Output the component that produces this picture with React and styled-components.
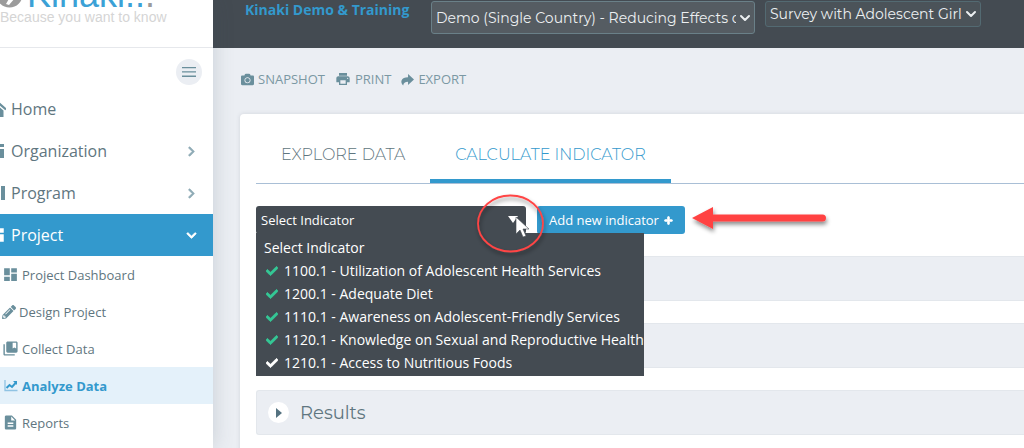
import React from 'react';
import styled, { createGlobalStyle, css } from 'styled-components';
import {
  FaCamera,
  FaCheck,
  FaChevronDown,
  FaChevronRight,
  FaPencilAlt,
  FaPlus,
} from 'react-icons/fa';
import { MdCollectionsBookmark, MdDashboard, MdDescription, MdPrint } from 'react-icons/md';
import { ChevronDown } from 'lucide-react';

const GlobalStyle = createGlobalStyle`
  * {
    box-sizing: border-box;
  }
  body {
    margin: 0;
    overflow: hidden;
    background-color: #ebeef3;
    color: #5f7680;
    font-family: 'Open Sans', 'Noto Sans', sans-serif;
  }
`;

const Page = styled.div`
  display: flex;
  height: 100vh;
  overflow: hidden;
`;

const Sidebar = {
  container: styled.aside`
    position: relative;
    z-index: 1;
    flex: 0 0 213px;
    overflow: hidden;
    background-color: #fff;
    box-shadow: 0 0 20px rgba(60, 75, 90, 0.2);
  `,
  brand: styled.div`
    height: 48px;
    overflow: hidden;
    border-bottom: 1px solid #e6e8ec;
    font-family: 'Liberation Sans', Arial, sans-serif;
  `,
  logo: styled.div`
    display: flex;
    align-items: flex-end;
    gap: 4px;
    height: 40px;
    margin-top: -25px;
    color: #3ba1d6;
    font-size: 36px;
    line-height: 40px;
    svg {
      flex: none;
    }
    span {
      color: #9b9b9b;
    }
  `,
  tagline: styled.div`
    margin-top: -7px;
    color: #d5d5d5;
    font-size: 14px;
    line-height: 18px;
    white-space: nowrap;
  `,
  tools: styled.div`
    display: flex;
    justify-content: flex-end;
    padding: 11px 11px 3px;
  `,
  nav: styled.nav`
    display: flex;
    flex-direction: column;
  `,
};

const MenuButton = styled.button`
  display: flex;
  align-items: center;
  justify-content: center;
  width: 26px;
  height: 26px;
  padding: 0;
  border: 0;
  border-radius: 50%;
  background-color: #ebeef3;
  color: #6a8f9c;
`;

const NavLink = styled.a`
  display: flex;
  align-items: center;
  gap: 5px;
  height: 42px;
  padding-right: 16px;
  color: #5f7680;
  font-size: 16px;
  text-decoration: none;
  .icon {
    flex: none;
    width: 18px;
    height: 18px;
    margin-left: -12px;
    color: #6a8f9c;
  }
  .arrow {
    margin-left: auto;
    color: #8fabb6;
    stroke: currentColor;
    stroke-width: 30px;
  }
  ${(props) =>
    props.$active &&
    css`
      background-color: #3399cd;
      color: #fff;
      .icon,
      .arrow {
        color: #fff;
      }
    `}
`;

const SubLink = styled.a`
  display: flex;
  align-items: center;
  gap: 3px;
  height: 37px;
  padding-left: 2px;
  color: #5f7680;
  font-size: 13px;
  text-decoration: none;
  svg {
    flex: none;
    color: #6a8f9c;
  }
  ${(props) =>
    props.$active &&
    css`
      background-color: #e4f1fa;
      color: #3399cd;
      font-weight: 700;
      svg {
        color: #3399cd;
      }
    `}
`;

const Main = styled.div`
  flex: 1;
  min-width: 0;
`;

const Header = {
  container: styled.header`
    display: flex;
    align-items: flex-start;
    height: 48px;
    padding: 1px 32px 0;
    background-color: #444b52;
  `,
  title: styled.div`
    flex: none;
    width: 186px;
    color: #3399cd;
    font-size: 14px;
    font-weight: 700;
    line-height: 18px;
  `,
  field: styled.div`
    position: relative;
    flex: 0 1 ${(props) => (props.$large ? '324px' : '216px')};
    margin-right: 10px;
    color: #eceff1;
    svg {
      position: absolute;
      top: 50%;
      right: 2px;
      margin-top: -8px;
      pointer-events: none;
    }
  `,
  select: styled.select`
    display: block;
    width: 100%;
    height: ${(props) => (props.$large ? '33px' : '26px')};
    padding: 0 18px 0 4px;
    border: 1px solid ${(props) => (props.$large ? '#6a8088' : '#536a72')};
    border-radius: 3px;
    appearance: none;
    background-color: ${(props) => (props.$large ? '#555c62' : '#4b5359')};
    color: inherit;
    font-family: Montserrat, Inter, sans-serif;
    font-size: 14px;
  `,
};

const Actions = styled.div`
  display: flex;
  gap: 10px;
  padding: 21px 28px 25px;
`;

const ActionButton = styled.button`
  display: flex;
  align-items: center;
  gap: 4px;
  height: 20px;
  padding: 0;
  border: 0;
  background: none;
  color: #7b98a3;
  font-family: inherit;
  font-size: 13px;
  svg {
    flex: none;
    color: #6a8f9c;
  }
`;

const Card = styled.section`
  min-height: 400px;
  margin-left: 27px;
  padding: 26px 0 0 16px;
  border-radius: 4px 0 0 0;
  background-color: #fff;
  box-shadow: 0 0 4px rgba(60, 75, 90, 0.15);
`;

const Tabs = styled.div`
  display: flex;
  border-bottom: 1px solid #a9bfd6;
`;

const Tab = styled.button`
  height: 43px;
  padding: 0 25px 10px;
  border: 0;
  border-bottom: 4px solid ${(props) => (props.$active ? '#3399cd' : 'transparent')};
  background: none;
  color: ${(props) => (props.$active ? '#3399cd' : '#5f7680')};
  font-family: Montserrat, Inter, sans-serif;
  font-size: 16px;
  font-weight: 300;
  white-space: nowrap;
`;

const Indicator = {
  row: styled.div`
    position: relative;
    display: flex;
    gap: 11px;
    margin: 22px 0;
  `,
  field: styled.div`
    position: relative;
    flex: 0 0 270px;
  `,
  select: styled.select`
    display: block;
    width: 100%;
    height: 28px;
    padding: 0 5px;
    border: 0;
    border-radius: 3px;
    appearance: none;
    background-color: #444b52;
    color: #fff;
    font-family: inherit;
    font-size: 13px;
  `,
  caret: styled.svg`
    position: absolute;
    top: 10px;
    right: 8px;
    pointer-events: none;
  `,
  list: styled.ul`
    position: absolute;
    z-index: 2;
    top: 27px;
    left: 0;
    width: 388px;
    margin: 0;
    padding: 3px 0 2px;
    overflow: hidden;
    background-color: #444b52;
    color: #fff;
    font-size: 14px;
    list-style: none;
  `,
  option: styled.li`
    display: flex;
    align-items: center;
    gap: 6px;
    height: 23px;
    padding-left: ${(props) => (props.$plain ? '8px' : '10px')};
    white-space: nowrap;
    svg {
      flex: none;
      color: ${(props) => (props.$done ? '#34c795' : '#fff')};
      stroke: currentColor;
      stroke-width: 30px;
    }
  `,
};

const AddButton = styled.button`
  display: flex;
  align-items: center;
  gap: 5px;
  height: 28px;
  padding: 0 12px;
  border: 0;
  border-radius: 3px;
  background-color: #3399cd;
  color: #fff;
  font-family: inherit;
  font-size: 13px;
  white-space: nowrap;
  svg {
    stroke: currentColor;
    stroke-width: 50px;
  }
`;

const Annotation = styled.svg`
  position: absolute;
  z-index: 3;
  top: -16px;
  left: 214px;
  pointer-events: none;
`;

const Panels = styled.div`
  display: flex;
  flex-direction: column;
  gap: 22px;
`;

const Panel = styled.button`
  display: flex;
  align-items: center;
  gap: 11px;
  width: 100%;
  height: 45px;
  padding: 0 11px;
  border: 1px solid #e3e7ec;
  border-right: 0;
  border-radius: 3px 0 0 3px;
  background-color: #ebeef3;
  color: #5f7680;
  font-family: Montserrat, Inter, sans-serif;
  font-size: 18px;
`;

const PanelArrow = styled.span`
  display: flex;
  align-items: center;
  justify-content: center;
  width: 21px;
  height: 21px;
  border-radius: 50%;
  background-color: #fff;
`;

const HouseIcon = () => (
  <svg className="icon" viewBox="0 0 18 18" fill="currentColor" aria-hidden="true">
    <path d="M1 9.500L9.500 2 18 9.500" fill="none" stroke="currentColor" strokeWidth="2.200" />
    <path d="M3.500 10.500l6-5 6 5V17H11v-4H8v4H3.500z" />
  </svg>
);

const BuildingIcon = () => (
  <svg className="icon" viewBox="0 0 18 18" fill="currentColor" aria-hidden="true">
    <path d="M1 6h7v10H1zM10 2h6v3h-6zM10 7h6v9h-6z" />
  </svg>
);

const ColumnsIcon = () => (
  <svg className="icon" viewBox="0 0 18 18" fill="currentColor" aria-hidden="true">
    <path d="M1 2h4v14H1zM6 2h5v14H6zM13 2h4v14h-4z" />
  </svg>
);

const TrendIcon = () => (
  <svg width="17" height="17" viewBox="0 0 17 17" fill="none" aria-hidden="true">
    <path d="M3 3v10.500h12.500" stroke="#8fc3e3" strokeWidth="1.300" />
    <path d="M4.500 11l3-3 2.500 2 4-4.500" stroke="currentColor" strokeWidth="2" />
    <path d="M11 4h4v4z" fill="currentColor" />
  </svg>
);

const ExportIcon = () => (
  <svg width="13" height="13" viewBox="0 0 24 24" fill="currentColor" aria-hidden="true">
    <path d="M13 8V2l11 10-11 10v-6C7 16 5 18 4 23 1 20 0 17 1 14c1.500-4 6-6 12-6z" />
  </svg>
);

const navItems = [
  { label: 'Home', icon: <HouseIcon /> },
  { label: 'Organization', icon: <BuildingIcon />, arrow: 'right' },
  { label: 'Program', icon: <ColumnsIcon />, arrow: 'right' },
  { label: 'Project', icon: <MdDashboard className="icon" />, arrow: 'down', active: true },
];

const subItems = [
  { label: 'Project Dashboard', icon: <MdDashboard size={17} /> },
  { label: 'Design Project', icon: <FaPencilAlt size={14} /> },
  { label: 'Collect Data', icon: <MdCollectionsBookmark size={17} /> },
  { label: 'Analyze Data', icon: <TrendIcon />, active: true },
  { label: 'Reports', icon: <MdDescription size={17} /> },
];

const indicators = [
  { label: '1100.1 - Utilization of Adolescent Health Services', done: true },
  { label: '1200.1 - Adequate Diet', done: true },
  { label: '1110.1 - Awareness on Adolescent-Friendly Services', done: true },
  { label: '1120.1 - Knowledge on Sexual and Reproductive Health', done: true },
  { label: '1210.1 - Access to Nutritious Foods', done: false },
];

const panels = [{ id: 1 }, { id: 2 }, { id: 3, title: 'Results' }];

export default function App() {
  return (
    <Page>
      <GlobalStyle />
      <Sidebar.container>
        <Sidebar.brand>
          <Sidebar.logo>
            <svg width="23" height="33" viewBox="0 0 23 33" aria-hidden="true">
              <circle cx="9.500" cy="12.500" r="13" fill="#9b9b9b" />
              <path d="M6 22l5-9 4 3-6 7z" fill="#fff" />
            </svg>
            <div>
              Kinaki..<span>.</span>
            </div>
          </Sidebar.logo>
          <Sidebar.tagline>Because you want to know</Sidebar.tagline>
        </Sidebar.brand>
        <Sidebar.tools>
          <MenuButton aria-label="Toggle menu">
            <svg width="14" height="10" viewBox="0 0 14 10" fill="currentColor">
              <path d="M0 0h14v1.300H0zM0 4.300h14v1.300H0zM0 8.600h14v1.300H0z" />
            </svg>
          </MenuButton>
        </Sidebar.tools>
        <Sidebar.nav>
          {navItems.map((item) => (
            <NavLink key={item.label} href="#" $active={item.active}>
              {item.icon}
              {item.label}
              {item.arrow === 'right' && <FaChevronRight className="arrow" size={11} />}
              {item.arrow === 'down' && <FaChevronDown className="arrow" size={11} />}
            </NavLink>
          ))}
          {subItems.map((item) => (
            <SubLink key={item.label} href="#" $active={item.active}>
              {item.icon}
              {item.label}
            </SubLink>
          ))}
        </Sidebar.nav>
      </Sidebar.container>
      <Main>
        <Header.container>
          <Header.title>Kinaki Demo &amp; Training</Header.title>
          <Header.field $large>
            <Header.select $large aria-label="Project">
              <option>Demo (Single Country) - Reducing Effects of</option>
            </Header.select>
            <ChevronDown size={16} strokeWidth={3} />
          </Header.field>
          <Header.field>
            <Header.select aria-label="Survey">
              <option>Survey with Adolescent Girls</option>
            </Header.select>
            <ChevronDown size={16} strokeWidth={3} />
          </Header.field>
        </Header.container>
        <Actions>
          <ActionButton>
            <FaCamera size={13} />
            SNAPSHOT
          </ActionButton>
          <ActionButton>
            <MdPrint size={16} />
            PRINT
          </ActionButton>
          <ActionButton>
            <ExportIcon />
            EXPORT
          </ActionButton>
        </Actions>
        <Card>
          <Tabs role="tablist">
            <Tab role="tab">EXPLORE DATA</Tab>
            <Tab role="tab" aria-selected="true" $active>
              CALCULATE INDICATOR
            </Tab>
          </Tabs>
          <Indicator.row>
            <Indicator.field>
              <Indicator.select aria-label="Indicator">
                <option>Select Indicator</option>
              </Indicator.select>
              <Indicator.caret width="10" height="7" viewBox="0 0 10 7" fill="#fff">
                <path d="M0 0h10L5 7z" />
              </Indicator.caret>
              <Indicator.list role="listbox" aria-label="Indicators">
                <Indicator.option role="option" $plain>
                  Select Indicator
                </Indicator.option>
                {indicators.map((item) => (
                  <Indicator.option key={item.label} role="option" $done={item.done}>
                    <FaCheck size={12} />
                    {item.label}
                  </Indicator.option>
                ))}
              </Indicator.list>
            </Indicator.field>
            <AddButton>
              Add new indicator
              <FaPlus size={9} />
            </AddButton>
            <Annotation width="370" height="70" viewBox="470 190 370 70" aria-hidden="true">
              <defs>
                <filter id="shadow" x="-20%" y="-40%" width="140%" height="200%">
                  <feDropShadow dx="1" dy="3" stdDeviation="2" floodOpacity="0.45" />
                </filter>
              </defs>
              <path
                d="M516 217v17l4-4 3 7 3-1-3-7h6z"
                fill="#fff"
                stroke="#444b52"
                strokeWidth="0.6"
              />
              <g filter="url(#shadow)">
                <ellipse cx="510.500" cy="223.500" rx="32.500" ry="28" fill="none" stroke="#f44" strokeWidth="1.800" />
                <path
                  d="M692 218l21-11v7.500h109.500a3.500 3.500 0 0 1 0 7H713v7.500z"
                  fill="#ff4343"
                />
              </g>
            </Annotation>
          </Indicator.row>
          <Panels>
            {panels.map((panel) => (
              <Panel key={panel.id} aria-expanded="false">
                <PanelArrow>
                  <svg width="6" height="10" viewBox="0 0 6 10" fill="#547280">
                    <path d="M0 0l6 5-6 5z" />
                  </svg>
                </PanelArrow>
                {panel.title}
              </Panel>
            ))}
          </Panels>
        </Card>
      </Main>
    </Page>
  );
}
